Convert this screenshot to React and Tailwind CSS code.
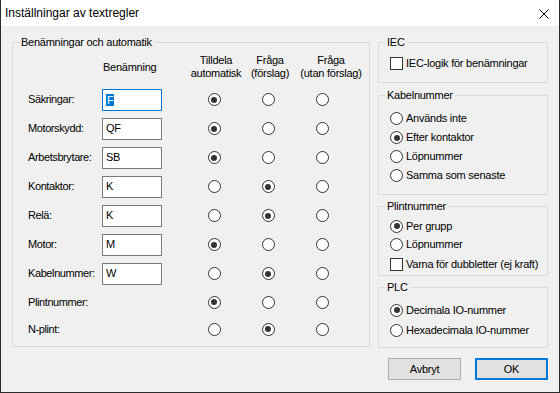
import React from 'react';

const rows = [
  { label: 'Säkringar:', value: 'F', pick: 0, focused: true },
  { label: 'Motorskydd:', value: 'QF', pick: 0 },
  { label: 'Arbetsbrytare:', value: 'SB', pick: 0 },
  { label: 'Kontaktor:', value: 'K', pick: 1 },
  { label: 'Relä:', value: 'K', pick: 1 },
  { label: 'Motor:', value: 'M', pick: 0 },
  { label: 'Kabelnummer:', value: 'W', pick: 1 },
  { label: 'Plintnummer:', value: null, pick: 0, h: 'h-[28px]' },
  { label: 'N-plint:', value: null, pick: 1, h: 'h-[26px]' },
];

function Radio({ on }) {
  return (
    <span className="w-[13px] h-[13px] rounded-full border border-[#333] bg-white flex items-center justify-center shrink-0">
      {on && <span className="w-[6px] h-[6px] rounded-full bg-[#333]" />}
    </span>
  );
}

function Check() {
  return <span className="w-[13px] h-[13px] border border-[#333] bg-white shrink-0" />;
}

function Group({ title, className, children }) {
  return (
    <fieldset className={`border border-[#dcdcdc] ${className}`}>
      <legend className="ml-[6px] px-[2px] leading-[13px]">{title}</legend>
      {children}
    </fieldset>
  );
}

function Option({ kind = 'radio', on, label, h = 'h-[19px]' }) {
  return (
    <div className={`flex items-center gap-[3px] pl-[11px] ${h}`}>
      {kind === 'radio' ? <Radio on={on} /> : <Check />}
      <span>{label}</span>
    </div>
  );
}

export default function App() {
  return (
    <div className="w-[560px] h-[393px] flex flex-col bg-[#f0f0f0] border-x border-b border-[#2b2b2b] text-black text-[11px] tracking-[-0.25px] font-['Liberation_Sans',Arial,sans-serif] overflow-hidden">
      {/* title bar */}
      <div className="h-[26px] shrink-0 bg-white flex items-center justify-between pl-[4px] pr-[10px]">
        <span className="text-[12px] tracking-normal">Inställningar av textregler</span>
        <svg width="10" height="10" viewBox="0 0 10 10" className="mt-[1px]">
          <path d="M0.5 0.5 L9.5 9.5 M9.5 0.5 L0.5 9.5" stroke="#000" strokeWidth="1" />
        </svg>
      </div>

      <div className="flex-1 flex flex-col px-[11px] pt-[10px]">
        <div className="flex gap-[8px]">
          {/* left group */}
          <Group title="Benämningar och automatik" className="w-[358px] h-[311px]">
            <div className="pl-[15px]">
              <div className="flex h-[26px] mt-[5px] leading-[13px] text-center">
                <div className="w-[74px]" />
                <div className="w-[60px] text-left pl-[1px] pt-[7px]">Benämning</div>
                <div className="w-[25px]" />
                <div className="w-[54px] ml-[2px]">Tilldela<br />automatisk</div>
                <div className="w-[54px]">Fråga<br />(förslag)</div>
                <div className="w-[64px] ml-[2px]">Fråga<br />(utan förslag)</div>
              </div>
              <div className="mt-[5px] flex flex-col">
                {rows.map((r) => (
                  <div key={r.label} className={`flex items-center ${r.h || 'h-[29px]'}`}>
                    <div className="w-[74px] tracking-[-0.4px]">{r.label}</div>
                    <div className="w-[60px]">
                      {r.value && (
                        <div className={`h-[22px] bg-white flex items-center pl-[3px] border ${r.focused ? 'border-[#0078d7]' : 'border-[#7a7a7a]'}`}>
                          {r.focused ? (
                            <span className="bg-[#0078d7] text-white px-[1px] leading-[12px]">{r.value}</span>
                          ) : (
                            r.value
                          )}
                        </div>
                      )}
                    </div>
                    <div className="w-[25px]" />
                    {[0, 1, 2].map((c) => (
                      <div key={c} className="w-[54px] flex justify-center">
                        <Radio on={r.pick === c} />
                      </div>
                    ))}
                  </div>
                ))}
              </div>
            </div>
          </Group>

          {/* right column */}
          <div className="w-[170px] flex flex-col">
            <Group title="IEC" className="h-[47px]">
              <div className="mt-[5px]">
                <Option kind="check" label="IEC-logik för benämningar" />
              </div>
            </Group>
            <Group title="Kabelnummer" className="h-[106px] mt-[6px]">
              <div className="mt-[7px]">
                <Option on={false} label="Används inte" />
                <Option on label="Efter kontaktor" />
                <Option on={false} label="Löpnummer" />
                <Option on={false} label="Samma som senaste" />
              </div>
            </Group>
            <Group title="Plintnummer" className="h-[76px] mt-[5px]">
              <div className="mt-[4px]">
                <Option on label="Per grupp" h="h-[18px]" />
                <Option on={false} label="Löpnummer" h="h-[19px]" />
                <Option kind="check" label="Varna för dubbletter (ej kraft)" h="h-[20px]" />
              </div>
            </Group>
            <Group title="PLC" className="h-[67px] mt-[5px]">
              <div className="mt-[6px]">
                <Option on label="Decimala IO-nummer" h="h-[20px]" />
                <Option on={false} label="Hexadecimala IO-nummer" h="h-[20px]" />
              </div>
            </Group>
          </div>
        </div>

        {/* buttons */}
        <div className="flex justify-end gap-[14px] mt-[10px]">
          <button className="w-[73px] h-[22px] bg-[#e1e1e1] border border-[#adadad] flex items-center justify-center">
            Avbryt
          </button>
          <button className="w-[73px] h-[22px] bg-[#e1e1e1] border-2 border-[#0078d7] flex items-center justify-center">
            OK
          </button>
        </div>
      </div>
    </div>
  );
}
